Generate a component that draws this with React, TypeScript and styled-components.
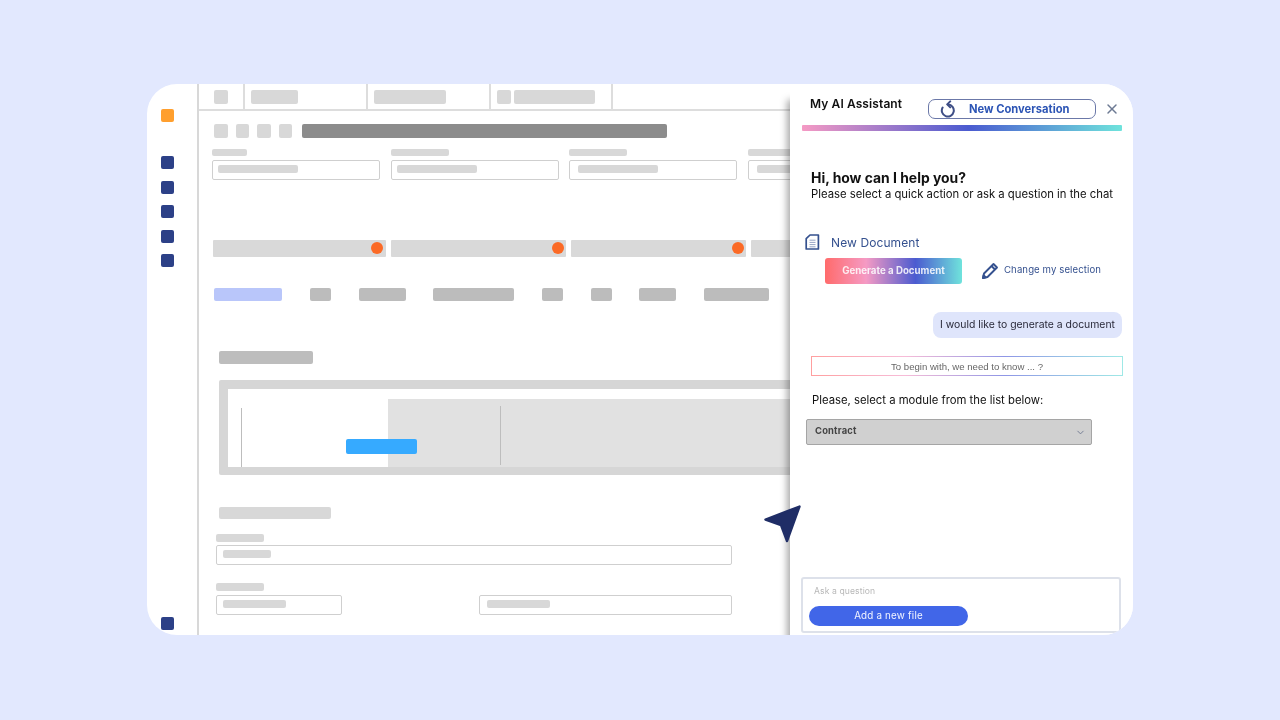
import * as React from "react";
import styled, { createGlobalStyle } from "styled-components";
import { ChevronDown, X } from "lucide-react";

const PANEL_FONT = `"Inter", "Noto Sans", sans-serif`;
const BRAND_GRADIENT = "linear-gradient(90deg, #ff6b6b 0%, #f59ac4 30%, #4b5bd0 66%, #6fe3dc 100%)";
const HINT_GRADIENT = "linear-gradient(90deg, #ff9f9f 0%, #f7bcd8 30%, #8f96e6 62%, #9fe9e6 100%)";

const GlobalStyle = createGlobalStyle`
  html, body {
    margin: 0;
    height: 100%;
    background: #e2e8fe;
  }
  #root {
    height: 100%;
  }
`;

const Page = styled.div`
  width: 1280px;
  height: 720px;
  padding: 84px 147px 85px;
  box-sizing: border-box;
`;

const Card = styled.div`
  position: relative;
  display: flex;
  width: 986px;
  height: 551px;
  background: white;
  border-radius: 30px;
  overflow: hidden;
`;

const Sidebar = styled.aside`
  flex: none;
  display: flex;
  flex-direction: column;
  gap: 11.5px;
  box-sizing: border-box;
  width: 52px;
  padding: 24.5px 0 5px 14px;
  border-right: 2px solid #d8d8d8;
  filter: blur(0.5px);
`;

const NavSquare = styled.div<{ $accent?: boolean; $bottom?: boolean }>`
  width: 13px;
  height: 13px;
  border-radius: 2px;
  background: ${(p) => (p.$accent ? "#ff9f2e" : "#2c4087")};
  margin-bottom: ${(p) => (p.$accent ? "23px" : "0")};
  margin-top: ${(p) => (p.$bottom ? "auto" : "0")};
`;

const Main = styled.main`
  flex: none;
  width: 591px;
  overflow: hidden;
  filter: blur(0.6px);
`;

const TopBar = styled.div`
  display: flex;
  box-sizing: border-box;
  height: 27px;
  border-bottom: 2px solid #dddddd;
`;

const TopCell = styled.div<{ $w: number; $pad: number }>`
  display: flex;
  gap: 3px;
  box-sizing: border-box;
  width: ${(p) => p.$w}px;
  padding: 6px 0 0 ${(p) => p.$pad}px;
  border-right: 2px solid #dddddd;
`;

const TopChip = styled.div<{ $w: number }>`
  width: ${(p) => p.$w}px;
  height: 14px;
  border-radius: 2px;
  background: #d8d8d8;
`;

const ToolRow = styled.div`
  display: flex;
  gap: 8px;
  margin: 13px 0 0 15px;
`;

const ToolSquare = styled.div`
  flex: none;
  width: 13.5px;
  height: 13.5px;
  border-radius: 2px;
  background: #d8d8d8;
`;

const RecordTitle = styled.div`
  flex: none;
  width: 365px;
  height: 13.5px;
  margin-left: 2px;
  border-radius: 2px;
  background: #8c8c8c;
`;

const FieldRow = styled.div`
  display: flex;
  gap: 10.5px;
  margin: 11px 0 0 13px;
`;

const Field = styled.div<{ $w: number }>`
  flex: none;
  width: ${(p) => p.$w}px;
`;

const FieldLabel = styled.div<{ $w: number }>`
  width: ${(p) => p.$w}px;
  height: 7.5px;
  border-radius: 2px;
  background: #d8d8d8;
`;

const FieldInput = styled.div<{ $gap?: number; $pad?: number }>`
  box-sizing: border-box;
  height: 20px;
  margin-top: ${(p) => p.$gap ?? 3.5}px;
  padding: 4.5px 0 0 ${(p) => p.$pad ?? 5.5}px;
  border: 1.5px solid #cfcfcf;
  border-radius: 2px;
`;

const FieldValue = styled.div<{ $w: number }>`
  width: ${(p) => p.$w}px;
  height: 8px;
  border-radius: 2px;
  background: #d8d8d8;
`;

const StatusRow = styled.div`
  display: flex;
  gap: 5px;
  margin: 60px 0 0 14px;
`;

const StatusBar = styled.div<{ $w: number; $pad: number }>`
  flex: none;
  display: flex;
  align-items: center;
  justify-content: flex-end;
  box-sizing: border-box;
  width: ${(p) => p.$w}px;
  height: 17px;
  padding-right: ${(p) => p.$pad}px;
  border-radius: 1px;
  background: #d9d9d9;
`;

const StatusDot = styled.span`
  width: 12px;
  height: 12px;
  border-radius: 50%;
  background: #fb6a26;
`;

const PillRow = styled.div`
  display: flex;
  gap: 27.7px;
  margin: 31px 0 0 15.3px;
`;

const Pill = styled.div<{ $w: number; $active?: boolean }>`
  width: ${(p) => p.$w}px;
  height: 13.5px;
  border-radius: 2px;
  background: ${(p) => (p.$active ? "#b9c6fa" : "#bcbcbc")};
`;

const SectionTitle = styled.div<{ $w: number; $top: number; $light?: boolean }>`
  width: ${(p) => p.$w}px;
  height: 12.5px;
  margin: ${(p) => p.$top}px 0 0 20px;
  border-radius: 2px;
  background: ${(p) => (p.$light ? "#d8d8d8" : "#bdbdbd")};
`;

const GanttFrame = styled.div`
  box-sizing: border-box;
  width: 600px;
  height: 95px;
  margin: 16px 0 0 20px;
  padding: 9px 0 8px 9px;
  border-radius: 2px 0 0 2px;
  background: #d6d6d6;
`;

const GanttInner = styled.div`
  position: relative;
  display: flex;
  height: 78px;
  background: white;
`;

const GanttLeft = styled.div`
  flex: none;
  width: 160px;
  box-sizing: border-box;
  padding: 19px 0 0 13px;
`;

const GanttRight = styled.div`
  flex: 1;
  margin-top: 10px;
  padding: 7px 0 0 112px;
  background: #e1e1e1;
`;

const GanttLine = styled.div`
  width: 1px;
  height: 59px;
  background: #bdbdbd;
`;

const GanttTask = styled.div`
  position: absolute;
  left: 118px;
  top: 50px;
  width: 71px;
  height: 15px;
  border-radius: 2px;
  background: #36aaff;
`;

const FormRow = styled.div`
  display: flex;
  gap: 137px;
  margin-left: 17px;
`;

const FormLabel = styled.div<{ $top: number }>`
  width: 48px;
  height: 8px;
  margin: ${(p) => p.$top}px 0 0 17px;
  border-radius: 2px;
  background: #d8d8d8;
`;

const Panel = styled.section`
  position: relative;
  z-index: 1;
  flex: none;
  display: flex;
  flex-direction: column;
  width: 343px;
  background: white;
  box-shadow: -3px 16px 7px rgba(0, 0, 0, 0.34);
  filter: blur(0.25px);
  font-family: ${PANEL_FONT};
  color: #111;
`;

const PanelHeader = styled.header`
  display: flex;
  align-items: center;
  height: 20px;
  margin: 15px 0 0 20px;
`;

const PanelTitle = styled.h2`
  width: 118px;
  margin: -11px 0 0;
  font-size: 12px;
  font-weight: 600;
  letter-spacing: 0.1px;
`;

const NewConversation = styled.button`
  display: flex;
  align-items: center;
  box-sizing: border-box;
  width: 168px;
  height: 20px;
  padding: 0 0 0 10px;
  border: 1.5px solid #6b78a8;
  border-radius: 7px;
  background: white;
  color: #2d55b5;
  font-family: ${PANEL_FONT};
  font-size: 11.2px;
  font-weight: 700;
`;

const NewConversationLabel = styled.span`
  margin-left: 12px;
`;

const CloseButton = styled.span`
  display: flex;
  margin-left: 8px;
  color: #6d7a93;
`;

const RainbowBar = styled.div`
  width: 320px;
  height: 6px;
  margin: 6px 0 0 12px;
  border-radius: 1px;
  background: linear-gradient(90deg, #f59ac4 0%, #4b5bd0 52%, #6fe3dc 100%);
`;

const Greeting = styled.h3`
  margin: 39px 0 0 21px;
  font-size: 13.9px;
  line-height: 17px;
  font-weight: 700;
`;

const SubGreeting = styled.p`
  margin: 0 0 0 21px;
  font-size: 11.3px;
  line-height: 15px;
  white-space: nowrap;
`;

const DocHeader = styled.div`
  display: flex;
  align-items: center;
  height: 16px;
  margin: 32px 0 0 15px;
  color: #35518f;
  font-size: 12px;
  letter-spacing: 0.1px;
  svg {
    margin-right: 11px;
  }
`;

const ActionRow = styled.div`
  display: flex;
  align-items: center;
  margin: 8px 0 0 35px;
`;

const GenerateButton = styled.button`
  width: 137px;
  height: 26px;
  padding: 0 0 1px;
  border: 0;
  border-radius: 3px;
  background: ${BRAND_GRADIENT};
  color: rgba(255, 255, 255, 0.85);
  font-family: ${PANEL_FONT};
  font-size: 9.7px;
  font-weight: 700;
`;

const ChangeSelection = styled.span`
  display: flex;
  align-items: center;
  margin: -4px 0 0 19px;
  color: #35518f;
  font-size: 9.6px;
  letter-spacing: 0.1px;
  svg {
    margin-right: 5px;
    margin-top: 4px;
  }
`;

const UserBubble = styled.div`
  align-self: flex-end;
  box-sizing: border-box;
  width: 189px;
  height: 26px;
  margin: 28px 11px 0 0;
  border-radius: 8px;
  background: #dfe5fb;
  color: #2a2a3a;
  font-size: 10.4px;
  line-height: 26px;
  text-align: center;
  white-space: nowrap;
`;

const HintBox = styled.div`
  box-sizing: border-box;
  width: 312px;
  height: 20px;
  margin: 18px 0 0 21px;
  border: 1px solid;
  border-image: ${HINT_GRADIENT} 1;
  color: #666;
  font-family: "Liberation Sans", Arial, sans-serif;
  font-size: 9.6px;
  line-height: 20px;
  text-align: center;
`;

const ModulePrompt = styled.p`
  margin: 17px 0 0 22px;
  font-size: 11.3px;
  line-height: 14px;
  white-space: nowrap;
`;

const ModuleSelect = styled.div`
  display: flex;
  align-items: center;
  justify-content: space-between;
  box-sizing: border-box;
  width: 286px;
  height: 26px;
  margin: 12px 0 0 16px;
  padding: 0 5px 3px 8px;
  border: 1px solid #a5a5a5;
  border-radius: 2px;
  background: #d0d0d0;
  color: #444;
  font-size: 9.4px;
  font-weight: 700;
  letter-spacing: 0.2px;
  svg {
    color: #6f7890;
    margin-top: 3px;
  }
`;

const Composer = styled.div`
  box-sizing: border-box;
  width: 320px;
  height: 56px;
  margin: auto 0 2px 11px;
  padding: 6px 0 0 6px;
  border: 2px solid #dde1ea;
  border-radius: 3px;
`;

const ComposerHint = styled.div`
  margin-left: 5px;
  color: #b8b8b8;
  font-size: 8.6px;
  line-height: 12px;
  letter-spacing: 0.1px;
`;

const AddFileButton = styled.button`
  display: block;
  width: 159px;
  height: 20px;
  margin-top: 9px;
  padding: 0 0 1px;
  border: 0;
  border-radius: 10px;
  background: #4166e8;
  color: #f3f5ff;
  font-family: ${PANEL_FONT};
  font-size: 9.8px;
  letter-spacing: 0.2px;
`;

const PointerMark = styled.svg`
  position: absolute;
  left: 616px;
  top: 420px;
  z-index: 2;
`;

const RefreshIcon = () => (
  <svg width="18" height="18" viewBox="0 0 18 18" fill="none" stroke="#3f4f86" strokeWidth="2" strokeLinecap="round" strokeLinejoin="round">
    <path d="M3.6 7.5A6 6 0 1 0 9.2 4.5" />
    <path d="M11.2 1.4 8.2 4.4l3 3" />
  </svg>
);

const DocIcon = () => (
  <svg width="15" height="16" viewBox="0 0 15 16" fill="none" stroke="#35518f">
    <path d="M5 1h8.4v14H1.2V4.6z" strokeWidth="1.7" strokeLinejoin="round" />
    <path d="M4.5 6.2h6M4.5 8.4h6M4.5 10.6h6M4.5 12.8h6" strokeWidth="0.7" strokeOpacity="0.75" />
  </svg>
);

const PencilIcon = () => (
  <svg width="18" height="18" viewBox="0 0 18 18" fill="none" stroke="#35518f" strokeWidth="1.9" strokeLinejoin="round">
    <path d="M2 16l1-4.5L12.5 2 16 5.5 6.5 15z" />
    <path d="M10.5 4l3.5 3.5" />
    <path d="M2 16l.6-2.8 2.2 2.2z" fill="#35518f" />
  </svg>
);

const topCells = [
  { w: 45.5, pad: 15, chips: [14] },
  { w: 123, pad: 6, chips: [47] },
  { w: 123, pad: 6, chips: [72] },
  { w: 122.5, pad: 6, chips: [14, 81] },
];

const fields = [
  { w: 168, label: 35, pad: 4.5, value: 80 },
  { w: 168, label: 58, pad: 5.5, value: 80 },
  { w: 168, label: 58, pad: 7.5, value: 80 },
  { w: 168, label: 58, pad: 8.5, value: 80 },
];

const statusBars = [
  { w: 173, pad: 3, dot: true },
  { w: 175, pad: 2, dot: true },
  { w: 175, pad: 2, dot: true },
  { w: 60, pad: 0, dot: false },
];

const pills = [68, 21, 47, 81, 21, 21, 37, 65];
const navItems = [1, 2, 3, 4, 5];

export default function App() {
  return (
    <Page>
      <GlobalStyle />
      <Card>
        <Sidebar>
          <NavSquare $accent />
          {navItems.map((n) => (
            <NavSquare key={n} />
          ))}
          <NavSquare $bottom />
        </Sidebar>

        <Main>
          <TopBar>
            {topCells.map((cell, i) => (
              <TopCell key={i} $w={cell.w} $pad={cell.pad}>
                {cell.chips.map((w, j) => (
                  <TopChip key={j} $w={w} />
                ))}
              </TopCell>
            ))}
          </TopBar>

          <ToolRow>
            <ToolSquare />
            <ToolSquare />
            <ToolSquare />
            <ToolSquare />
            <RecordTitle />
          </ToolRow>

          <FieldRow>
            {fields.map((f, i) => (
              <Field key={i} $w={f.w}>
                <FieldLabel $w={f.label} />
                <FieldInput $pad={f.pad}>
                  <FieldValue $w={f.value} />
                </FieldInput>
              </Field>
            ))}
          </FieldRow>

          <StatusRow>
            {statusBars.map((s, i) => (
              <StatusBar key={i} $w={s.w} $pad={s.pad}>
                {s.dot && <StatusDot />}
              </StatusBar>
            ))}
          </StatusRow>

          <PillRow>
            {pills.map((w, i) => (
              <Pill key={i} $w={w} $active={i === 0} />
            ))}
          </PillRow>

          <SectionTitle $w={94} $top={50} />

          <GanttFrame>
            <GanttInner>
              <GanttLeft>
                <GanttLine />
              </GanttLeft>
              <GanttRight>
                <GanttLine />
              </GanttRight>
              <GanttTask />
            </GanttInner>
          </GanttFrame>

          <SectionTitle $w={112} $top={32} $light />

          <FormLabel $top={14.5} />
          <FormRow>
            <Field $w={516}>
              <FieldInput $gap={3}>
                <FieldValue $w={48} />
              </FieldInput>
            </Field>
          </FormRow>

          <FormLabel $top={18} />
          <FormRow>
            <Field $w={126}>
              <FieldInput $gap={4}>
                <FieldValue $w={63} />
              </FieldInput>
            </Field>
            <Field $w={253}>
              <FieldInput $gap={4} $pad={6.5}>
                <FieldValue $w={63} />
              </FieldInput>
            </Field>
          </FormRow>
        </Main>

        <Panel>
          <PanelHeader>
            <PanelTitle>My AI Assistant</PanelTitle>
            <NewConversation>
              <RefreshIcon />
              <NewConversationLabel>New Conversation</NewConversationLabel>
            </NewConversation>
            <CloseButton>
              <X size={16} strokeWidth={2.2} />
            </CloseButton>
          </PanelHeader>
          <RainbowBar />

          <Greeting>Hi, how can I help you?</Greeting>
          <SubGreeting>Please select a quick action or ask a question in the chat</SubGreeting>

          <DocHeader>
            <DocIcon />
            New Document
          </DocHeader>
          <ActionRow>
            <GenerateButton>Generate a Document</GenerateButton>
            <ChangeSelection>
              <PencilIcon />
              Change my selection
            </ChangeSelection>
          </ActionRow>

          <UserBubble>I would like to generate a document</UserBubble>
          <HintBox>To begin with, we need to know ... ?</HintBox>
          <ModulePrompt>Please, select a module from the list below:</ModulePrompt>
          <ModuleSelect>
            Contract
            <ChevronDown size={11} strokeWidth={2} />
          </ModuleSelect>

          <Composer>
            <ComposerHint>Ask a question</ComposerHint>
            <AddFileButton>Add a new file</AddFileButton>
          </Composer>
        </Panel>

        <PointerMark width="40" height="40" viewBox="0 0 40 40">
          <path d="M2.5 15.5 36.5 2.5 24 37 18 21z" fill="#1f2d66" stroke="#1f2d66" strokeWidth="2.4" strokeLinejoin="round" />
        </PointerMark>
      </Card>
    </Page>
  );
}
